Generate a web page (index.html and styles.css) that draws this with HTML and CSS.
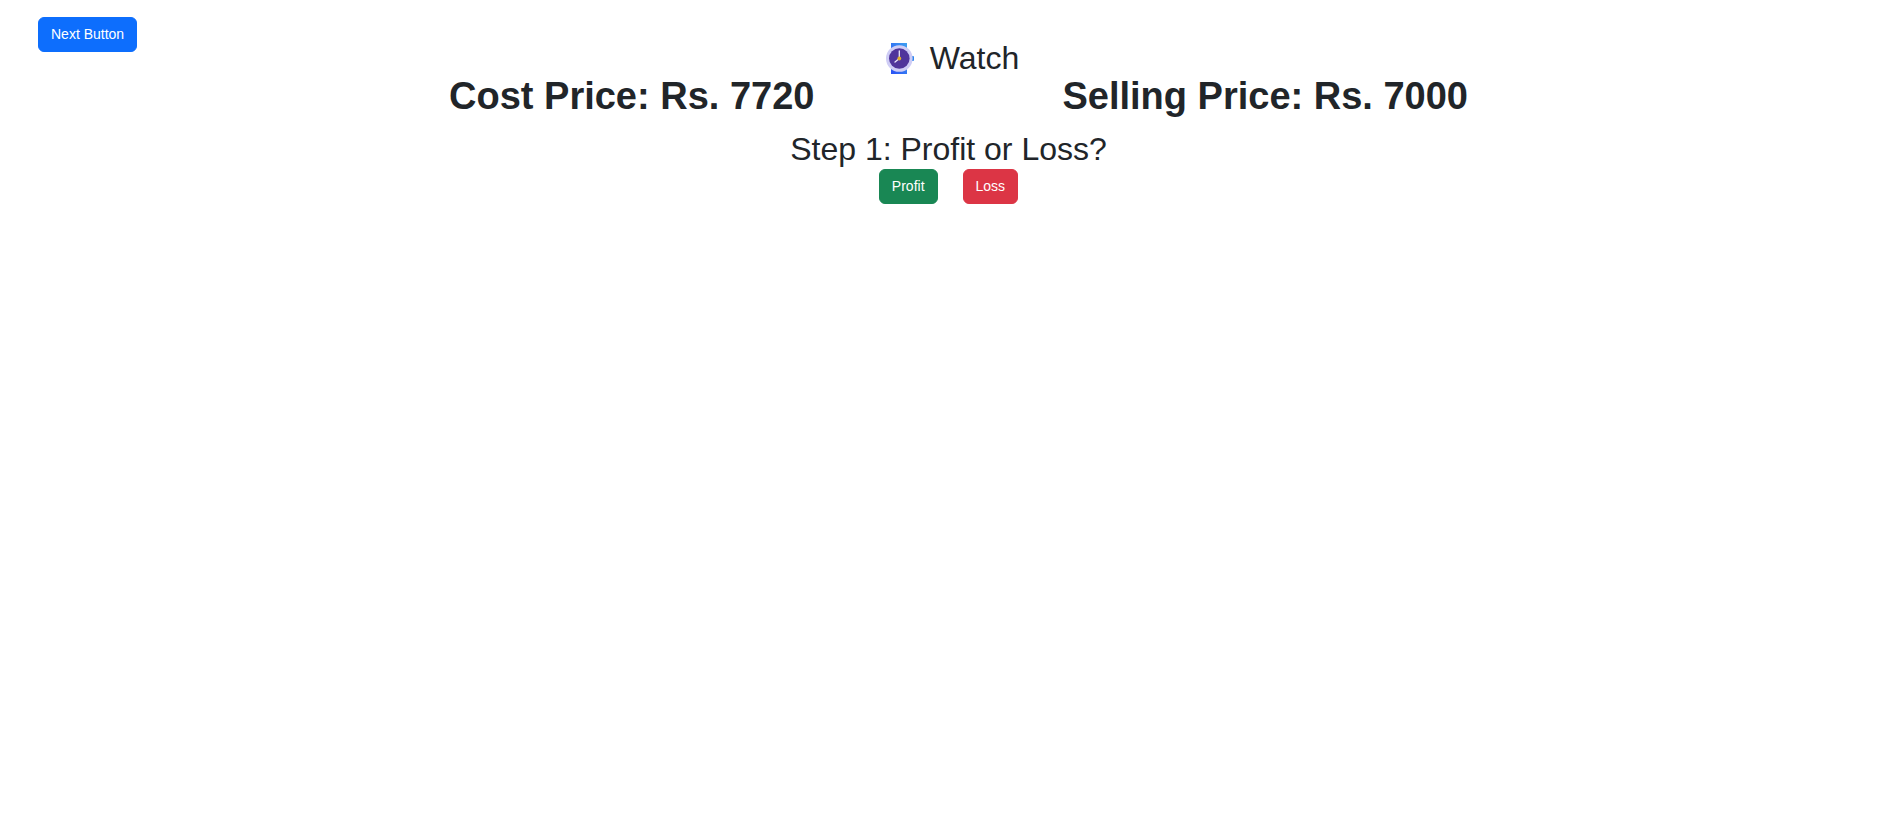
FILE: index.html
```html
<!DOCTYPE html>
<html lang="en">

<head>
    <meta charset="UTF-8">
    <meta name="viewport" content="width=device-width, initial-scale=1.0">
    <title>Profit and Loss</title>
    <link rel="stylesheet" href="styles.css">
</head>

<body>
    <header class="top">
        <button type="button" class="btn next">Next Button</button>
        <h2 class="item">
            <svg class="watch" viewBox="0 0 28 31" aria-hidden="true">
                <defs>
                    <linearGradient id="strap" x1="0" y1="1" x2="1" y2="0">
                        <stop offset="0" stop-color="#2950f5" />
                        <stop offset="1" stop-color="#3da0f0" />
                    </linearGradient>
                </defs>
                <rect x="5" y="0" width="16" height="31" fill="url(#strap)" />
                <rect x="25" y="13" width="3" height="5" rx="1" fill="#2d86ee" />
                <circle cx="13.300" cy="15.500" r="13.300" fill="#cfcdf5" />
                <circle cx="13.300" cy="15.500" r="10.300" fill="#50359b" />
                <path d="M13.300 15.500V8M13.300 15.500L9 19" stroke="#e9e5fa" stroke-width="1.300" stroke-linecap="round" />
                <circle cx="13.300" cy="15.500" r="1.900" fill="#e0b02c" />
            </svg>
            <span>Watch</span>
        </h2>
    </header>
    <main>
        <div class="prices">
            <h1>Cost Price: Rs. 7720</h1>
            <h1>Selling Price: Rs. 7000</h1>
        </div>
        <h2>Step 1: Profit or Loss?</h2>
        <div class="choices">
            <button type="button" class="btn profit">Profit</button>
            <button type="button" class="btn loss">Loss</button>
        </div>
    </main>
</body>

</html>
```
FILE: styles.css
```css
* {
    margin: 0;
    padding: 0;
    box-sizing: border-box;
}

body {
    font-family: "Liberation Sans", Arial, sans-serif;
    color: #212529;
    background-color: #fff;
}

h1 {
    font-size: 38px;
    line-height: 38px;
    font-weight: 700;
    text-align: center;
}

h2 {
    font-size: 32px;
    line-height: 38px;
    font-weight: 400;
    text-align: center;
}

.btn {
    font-family: inherit;
    font-size: 14px;
    line-height: 21px;
    padding: 6px 12px;
    border: 1px solid transparent;
    border-radius: 6px;
    color: #fff;
    cursor: pointer;
}

.top {
    display: grid;
    grid-template-columns: 1fr auto 1fr;
    align-items: start;
    padding: 17px 27px 0 38px;
}

.next {
    justify-self: start;
    background-color: #0d6efd;
    border-color: #0d6efd;
}

.item {
    display: flex;
    align-items: center;
    gap: 16px;
    margin-top: 22px;
}

.watch {
    width: 28px;
    height: 31px;
}

main {
    padding-left: 3px;
}

.prices {
    display: grid;
    grid-template-columns: 1fr 1fr;
    width: 67%;
    margin: 0 auto 15px;
}

.choices {
    display: flex;
    justify-content: center;
    gap: 25px;
    margin-top: 1px;
}

.profit {
    background-color: #198754;
    border-color: #198754;
}

.loss {
    background-color: #dc3545;
    border-color: #dc3545;
}
```
